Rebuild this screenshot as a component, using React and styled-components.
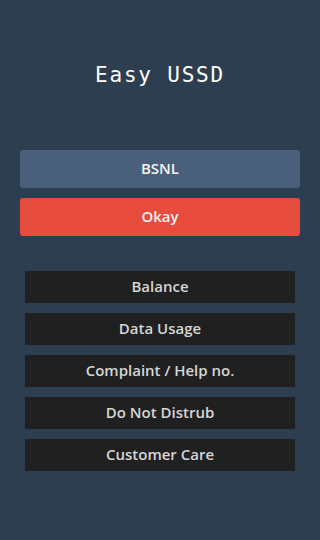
import React from 'react'
import styled, { createGlobalStyle } from 'styled-components'

const GlobalStyle = createGlobalStyle`
    html, body {
        margin: 0;
        padding: 0;
        background: #2d3e50;
    }
    body {
        font-family: "Open Sans", "DejaVu Sans", sans-serif;
    }
`

const Wrapper = styled.div`
    min-height: 540px;
    background: #2d3e50;
    padding: 0 20px;
    box-sizing: border-box;
    display: flex;
    flex-direction: column;
`

const Title = styled.h1`
    margin: 0;
    padding-top: 60px;
    height: 90px;
    box-sizing: border-box;
    text-align: center;
    font-family: "DejaVu Sans Mono", "Liberation Mono", monospace;
    font-weight: normal;
    font-size: 21px;
    letter-spacing: 1.8px;
    line-height: 30px;
    color: #ffffff;
`

const Actions = styled.div`
    display: flex;
    flex-direction: column;
    gap: 10px;
    margin-top: 60px;
`

const ActionBtn = styled.button`
    height: 38px;
    padding: 0 0 2px 0;
    border: none;
    border-radius: 3px;
    background: ${props => props.primary ? '#e74c3c' : '#4a5f7a'};
    color: #f4f4f4;
    font-family: "Open Sans", "DejaVu Sans", sans-serif;
    font-size: 15px;
    font-weight: 600;
    cursor: pointer;
`

const Menu = styled.div`
    display: flex;
    flex-direction: column;
    gap: 10px;
    margin: 35px 5px 0 5px;
`

const MenuItem = styled.button`
    height: 32px;
    padding: 0 0 2px 0;
    border: none;
    background: #202020;
    color: #d6d6d6;
    font-family: "Open Sans", "DejaVu Sans", sans-serif;
    font-size: 15px;
    font-weight: 600;
    cursor: pointer;
`

const items = ['Balance', 'Data Usage', 'Complaint / Help no.', 'Do Not Distrub', 'Customer Care']

const App = () => {
    return (
        <Wrapper>
            <GlobalStyle />
            <Title>Easy USSD</Title>
            <Actions>
                <ActionBtn>BSNL</ActionBtn>
                <ActionBtn primary>Okay</ActionBtn>
            </Actions>
            <Menu>
                {items.map(item => <MenuItem key={item}>{item}</MenuItem>)}
            </Menu>
        </Wrapper>
    )
}

export default App
